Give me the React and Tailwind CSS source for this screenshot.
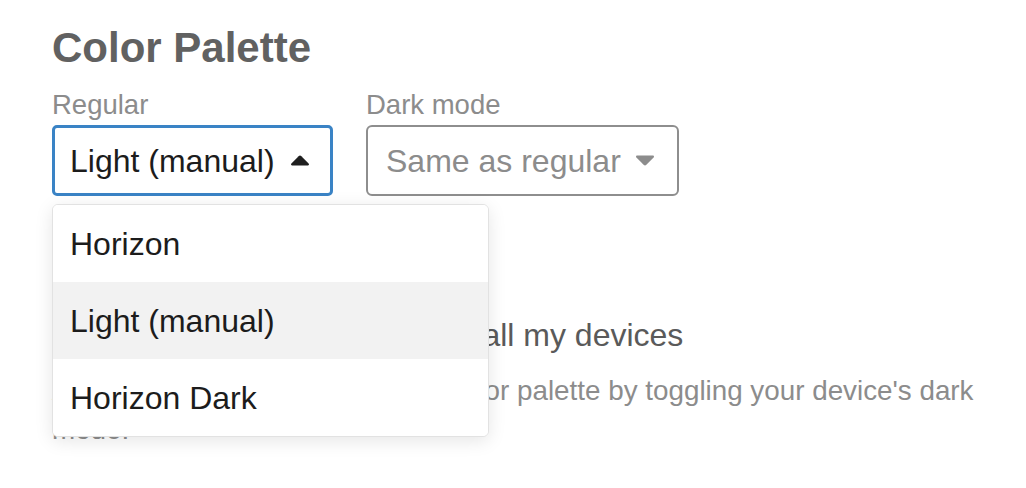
import React from 'react';

const font = { fontFamily: '"Liberation Sans", Arial, Helvetica, sans-serif' };

const Caret = ({ up, className }) => (
  <svg width="20" height="11" viewBox="0 0 20 11" className={className}>
    {up ? (
      <path d="M8.6 1.2 Q10 -0.2 11.4 1.2 L18.6 8.6 Q19.6 10 18 10.4 L2 10.4 Q0.4 10 1.4 8.6 Z" fill="currentColor" />
    ) : (
      <path d="M2 0.6 L18 0.6 Q19.6 1 18.6 2.4 L11.4 9.8 Q10 11.2 8.6 9.8 L1.4 2.4 Q0.4 1 2 0.6 Z" fill="currentColor" />
    )}
  </svg>
);

const options = ['Horizon', 'Light (manual)', 'Horizon Dark'];

export default function App() {
  const selected = 'Light (manual)';

  return (
    <div className="min-h-screen bg-white pl-[52px] pt-[24px]" style={font}>
      <h2 className="text-[42px] leading-[48px] font-bold text-[#616161]">Color Palette</h2>

      <div className="flex gap-[33px] mt-[17px]">
        <div className="relative flex flex-col">
          <label className="text-[27.5px] leading-[32px] text-[#8c8c8c]">Regular</label>
          <button
            type="button"
            className="mt-[4px] w-[281px] h-[71px] flex items-center justify-between pl-[15px] pr-[20px] border-[3px] border-[#3a83c5] rounded-[5px] bg-white"
          >
            <span className="text-[32px] leading-[36px] text-[#1c1c1c]">{selected}</span>
            <Caret up className="text-[#1f1f1f]" />
          </button>

          <div className="absolute left-0 top-[115px] z-10 w-[437px] bg-white border border-[#e2e2e2] rounded-[6px] shadow-[0_4px_18px_rgba(0,0,0,0.10)] overflow-hidden">
            {options.map((opt) => (
              <div
                key={opt}
                className={
                  opt === selected
                    ? 'h-[77px] flex items-center pl-[17px] bg-[#f2f2f2]'
                    : 'h-[77px] flex items-center pl-[17px] bg-white'
                }
              >
                <span className="text-[32px] leading-[36px] text-[#1c1c1c]">{opt}</span>
              </div>
            ))}
          </div>
        </div>

        <div className="flex flex-col">
          <label className="text-[27.5px] leading-[32px] text-[#8c8c8c]">Dark mode</label>
          <button
            type="button"
            className="mt-[4px] w-[313px] h-[71px] flex items-center justify-between pl-[18px] pr-[22px] border-2 border-[#8e8e8e] rounded-[6px] bg-white"
          >
            <span className="text-[32px] leading-[36px] text-[#8c8c8c]">Same as regular</span>
            <Caret className="text-[#8c8c8c]" />
          </button>
        </div>
      </div>

      <div className="mt-[121px] flex items-center gap-[36px]">
        <span className="w-[28px] h-[28px] border-2 border-[#8e8e8e] rounded-[4px] bg-white"></span>
        <span className="text-[32px] leading-[36px] text-[#5a5a5a]">Sync color palette across all my devices</span>
      </div>

      <p className="mt-[18px] w-[940px] text-[27.8px] leading-[39px] text-[#8c8c8c]">
        Automatically switch to the dark color palette by toggling your device's dark mode.
      </p>
    </div>
  );
}
